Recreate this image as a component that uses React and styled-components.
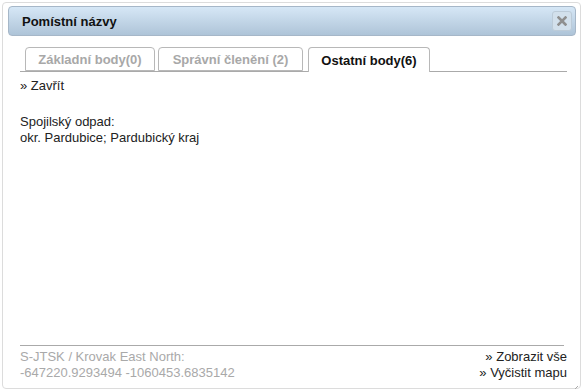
import styled, { createGlobalStyle } from "styled-components";

const GlobalStyle = createGlobalStyle`
  body {
    margin: 0;
    background: #ffffff;
    font-family: "Liberation Sans", Arial, sans-serif;
  }
`;

const tabs = [
  { title: "Základní body(0)", width: 130 },
  { title: "Správní členění (2)", width: 145 },
  { title: "Ostatní body(6)", width: 122, active: true },
];

const App = () => {
  return (
    <>
      <GlobalStyle />
      <Dialog>
        <TitleBar>
          <TitleText>Pomístní názvy</TitleText>
          <CloseButton>
            <svg width="10" height="10" viewBox="0 0 10 10">
              <path
                d="M1.5 1.5 L8.5 8.5 M8.5 1.5 L1.5 8.5"
                stroke="#8f8f8f"
                strokeWidth="2.6"
                strokeLinecap="square"
              />
            </svg>
          </CloseButton>
        </TitleBar>
        <Body>
          <TabList>
            {tabs.map((tab) => (
              <Tab key={tab.title} $active={tab.active} $width={tab.width}>
                {tab.title}
              </Tab>
            ))}
          </TabList>
          <CloseLink>» Zavřít</CloseLink>
          <Result>
            Spojilský odpad:
            <br />
            okr. Pardubice; Pardubický kraj
          </Result>
        </Body>
        <Footer>
          <Coords>
            S-JTSK / Krovak East North:
            <br />
            -647220.9293494 -1060453.6835142
          </Coords>
          <Actions>
            <Link>» Zobrazit vše</Link>
            <Link>» Vyčistit mapu</Link>
          </Actions>
        </Footer>
        <Grip>
          <svg width="8" height="8" viewBox="0 0 8 8">
            <path d="M7 1 L1 7 M7 4 L4 7" stroke="#aaa" strokeWidth="1" />
          </svg>
        </Grip>
      </Dialog>
    </>
  );
};

const Dialog = styled.div`
  position: relative;
  box-sizing: border-box;
  display: flex;
  flex-direction: column;
  margin: 2px 0 0 2px;
  width: 579px;
  height: 387px;
  padding: 3px 4px 0 5px;
  border: 1px solid #dcdcdc;
  border-radius: 4px;
  background: #ffffff;
`;

const TitleBar = styled.div`
  box-sizing: border-box;
  display: flex;
  align-items: center;
  justify-content: space-between;
  height: 30px;
  padding: 0 3px 0 13px;
  border: 1px solid #a6b7c8;
  border-radius: 4px;
  background: linear-gradient(#d6e7f6, #aec4d8);
`;

const TitleText = styled.span`
  font-size: 13px;
  font-weight: bold;
  color: #111111;
`;

const CloseButton = styled.div`
  box-sizing: border-box;
  display: flex;
  align-items: center;
  justify-content: center;
  width: 20px;
  height: 20px;
  border: 1px solid #bccbd8;
  border-radius: 3px;
  background: #d2e0ec;
`;

const Body = styled.div`
  flex: 1;
  padding: 11px 9px 0 12px;
`;

const TabList = styled.div`
  display: flex;
  gap: 3px;
  height: 24px;
  padding-left: 5px;
  border-bottom: 1px solid #aaaaaa;
`;

const Tab = styled.div`
  box-sizing: border-box;
  display: flex;
  align-items: center;
  justify-content: center;
  width: ${(p) => p.$width}px;
  height: ${(p) => (p.$active ? "25px" : "24px")};
  border: 1px solid #b8b8b8;
  border-bottom: ${(p) => (p.$active ? "none" : "1px solid #b8b8b8")};
  border-radius: 4px 4px 0 0;
  background: #ffffff;
  font-size: 13px;
  font-weight: bold;
  color: ${(p) => (p.$active ? "#111111" : "#a8a8a8")};
  margin-left: ${(p) => (p.$active ? "2px" : "0")};
`;

const Link = styled.div`
  font-size: 13px;
  line-height: 16px;
  color: #222222;
`;

const CloseLink = styled(Link)`
  margin-top: 6px;
`;

const Result = styled.div`
  margin-top: 20px;
  font-size: 13px;
  line-height: 16px;
  color: #222222;
`;

const Footer = styled.div`
  display: flex;
  justify-content: space-between;
  margin: 0 12px 0 12px;
  padding: 3px 0 7px;
  border-top: 1px solid #aaaaaa;
`;

const Coords = styled.div`
  font-size: 13px;
  line-height: 16px;
  color: #a9a9a9;
`;

const Actions = styled.div`
  display: flex;
  flex-direction: column;
  align-items: flex-end;
  margin-right: -3px;
`;

const Grip = styled.div`
  position: absolute;
  right: 1px;
  bottom: 1px;
  width: 8px;
  height: 8px;
`;

export default App;
